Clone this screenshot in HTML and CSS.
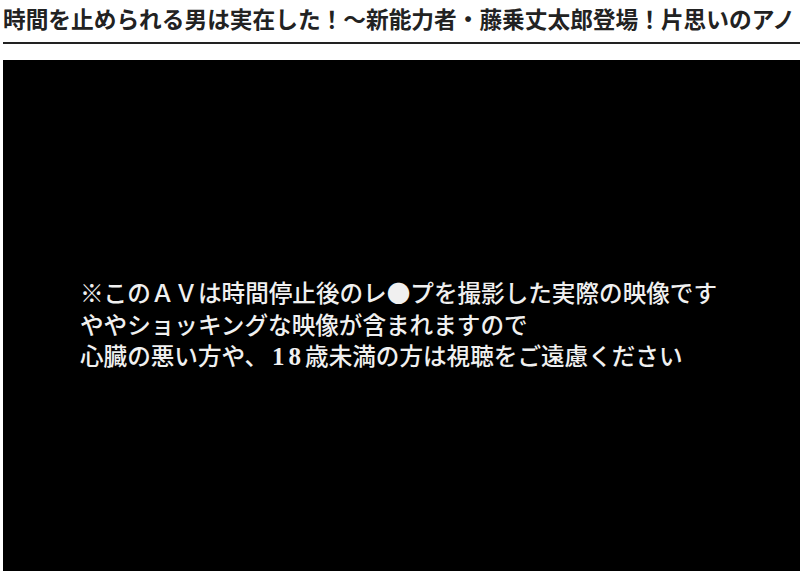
FILE: index.html
```html
<!DOCTYPE html>
<html lang="ja">
<head>
<meta charset="utf-8">
<link rel="stylesheet" href="styles.css">
</head>
<body>
<div class="page">
  <h1 class="title">時間を止められる男は実在した！～新能力者・藤乗丈太郎登場！片思いのアノ</h1>
  <div class="screen">
    <p class="notice">※このＡＶは時間停止後のレ●プを撮影した実際の映像です<br>ややショッキングな映像が含まれますので<br>心臓の悪い方や、<span class="num">18</span>歳未満の方は視聴をご遠慮ください</p>
  </div>
</div>
</body>
</html>
```

FILE: styles.css
```css
html, body {
  margin: 0;
  padding: 0;
  background: #ffffff;
  overflow: hidden;
  height: 100%;
}

.page {
  padding-left: 3px;
  display: flex;
  flex-direction: column;
}

.title {
  margin: 0;
  padding: 0 0 4px 0;
  height: 38px;
  line-height: 38px;
  font-family: "Noto Sans CJK JP", sans-serif;
  font-weight: 700;
  font-size: 22.7px;
  color: #222222;
  white-space: nowrap;
  border-bottom: 2px solid #222222;
}

.screen {
  margin-top: 16px;
  background: #000000;
  height: 511px;
  padding: 217px 0 0 77px;
  box-sizing: border-box;
}

.notice {
  margin: 0;
  color: #f0f0f0;
  font-family: "Noto Sans CJK JP", sans-serif;
  font-weight: 500;
  font-size: 23.6px;
  line-height: 31.5px;
  white-space: nowrap;
}

.num {
  font-family: "Liberation Serif", serif;
  font-weight: 700;
  font-size: 25px;
  letter-spacing: 4px;
  padding-left: 4px;
}
```
